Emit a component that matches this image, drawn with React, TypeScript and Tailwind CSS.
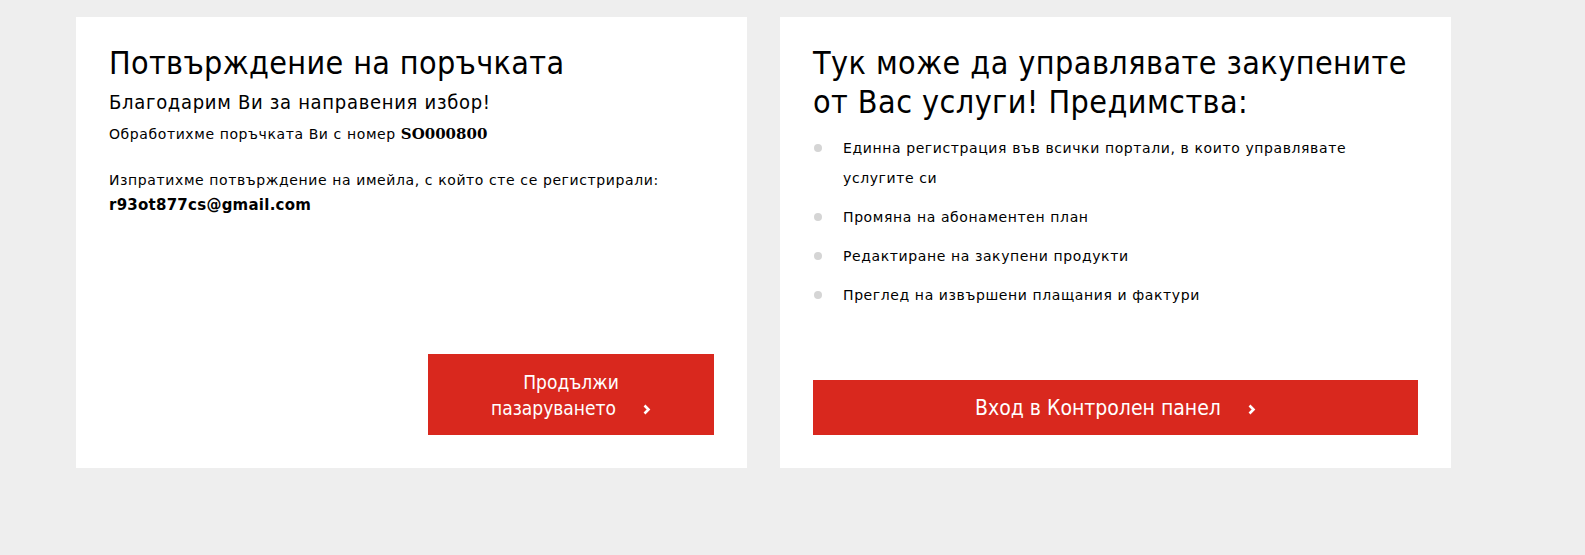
import { memo } from 'react'

const benefits = [
  'Единна регистрация във всички портали, в които управлявате услугите си',
  'Промяна на абонаментен план',
  'Редактиране на закупени продукти',
  'Преглед на извършени плащания и фактури',
]

function Chevron() {
  return (
    <svg
      className="inline-block w-[8px] h-[11px] ml-[27px] align-[0px]"
      viewBox="0 0 8 11"
      fill="none"
      stroke="currentColor"
      strokeWidth="2.6"
    >
      <polyline points="1.5,1.5 5.5,5.5 1.5,9.5" />
    </svg>
  )
}

function OrderCard() {
  return (
    <div className="w-[671px] h-[451px] bg-white px-[33px] pt-[27px] pb-[33px] flex flex-col">
      <h1 className="text-[32px] leading-[39px] tracking-[0.35px] text-black font-normal">
        Потвърждение на поръчката
      </h1>
      <h2 className="mt-[7px] text-[20px] leading-[24px] tracking-[0.7px] text-black font-normal">
        Благодарим Ви за направения избор!
      </h2>
      <p className="mt-[9px] text-[14px] leading-[23px] tracking-[0.6px] text-black [font-family:'DejaVu_Sans',sans-serif]">
        Обработихме поръчката Ви с номер{' '}
        <b className="font-bold text-[15px] tracking-[0px] [font-family:'DejaVu_Serif',serif]">SO000800</b>
      </p>
      <p className="mt-[23px] text-[14px] leading-[23px] tracking-[0.6px] text-black [font-family:'DejaVu_Sans',sans-serif]">
        Изпратихме потвърждение на имейла, с който сте се регистрирали:
        <b className="block font-bold text-[15px] leading-[27px] tracking-[0.25px]">r93ot877cs@gmail.com</b>
      </p>
      <div className="mt-auto flex justify-end">
        <button className="w-[286px] h-[81px] bg-[#d9281e] text-white text-[19px] leading-[26px] text-center px-[20px]">
          Продължи
          <br />
          пазаруването
          <Chevron />
        </button>
      </div>
    </div>
  )
}

function PanelCard() {
  return (
    <div className="w-[671px] h-[451px] bg-white px-[33px] pt-[27px] pb-[33px] flex flex-col">
      <h1 className="text-[32px] leading-[39px] tracking-[0.45px] text-black font-normal">
        Тук може да управлявате закупените от Вас услуги! Предимства:
      </h1>
      <ul className="mt-[11px]">
        {benefits.map((item) => (
          <li
            key={item}
            className="flex items-start mb-[9px] text-[14px] leading-[30px] tracking-[0.6px] text-black [font-family:'DejaVu_Sans',sans-serif]"
          >
            <span className="w-[8px] h-[8px] rounded-full bg-[#d5d5d5] mt-[11px] ml-[1px] mr-[21px] shrink-0" />
            <span className="pr-[20px]">{item}</span>
          </li>
        ))}
      </ul>
      <button className="mt-auto w-full h-[55px] bg-[#d9281e] text-white text-[21px] leading-[26px] text-center">
        Вход в Контролен панел
        <Chevron />
      </button>
    </div>
  )
}

function App() {
  return (
    <div className="min-h-screen bg-[#eeeeee] pt-[17px] pl-[76px] [font-family:'DejaVu_Sans_Condensed','DejaVu_Sans',sans-serif]">
      <div className="flex gap-[33px] items-start">
        <OrderCard />
        <PanelCard />
      </div>
    </div>
  )
}

export default memo(App)
